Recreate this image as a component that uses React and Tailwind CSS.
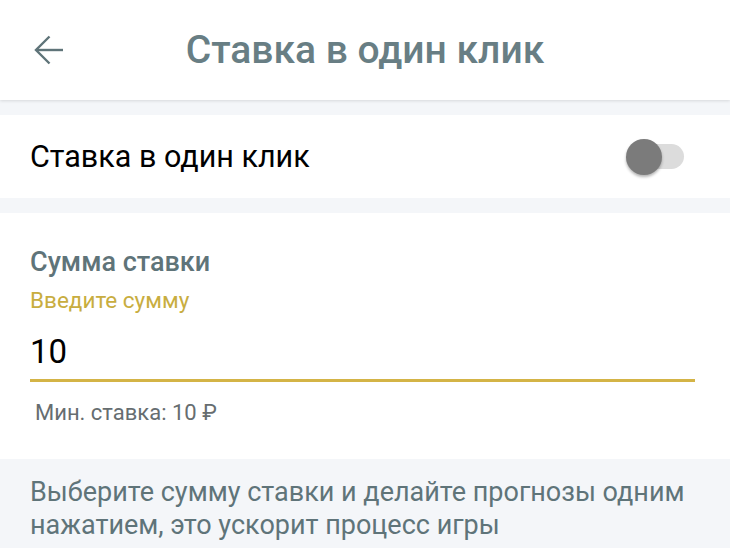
const BackArrow = () => (
    <svg width="30" height="30" viewBox="0 0 30 30" fill="none" stroke="currentColor" strokeWidth="2.4" strokeLinecap="butt">
        <path d="M29 15H2" />
        <path d="M15.5 1.5L2 15l13.5 13.5" />
    </svg>
);

const App = () => {
    return (
        <div className="w-[730px] h-[548px] overflow-hidden bg-[#f4f6f9]" style={{ fontFamily: 'Roboto, "Noto Sans", sans-serif' }}>
            <header className="relative h-[100px] bg-white shadow-[0_1px_3px_rgba(0,0,0,0.12)] flex items-center justify-center">
                <button className="absolute left-[34px] top-[35px] text-[#5f7479]">
                    <BackArrow />
                </button>
                <h1 className="text-[39px] font-medium text-[#687e84] leading-none">Ставка в один клик</h1>
            </header>

            <div className="mt-[15px] h-[83px] bg-white px-[30px] flex items-center justify-between">
                <span className="text-[30.5px] text-black">Ставка в один клик</span>
                <div className="relative w-[58px] h-[36px] mr-[16px] flex items-center">
                    <div className="absolute right-0 w-[50px] h-[25px] rounded-full bg-[#dcdcdc]" />
                    <div className="absolute left-0 w-[36px] h-[36px] rounded-full bg-[#7b7b7b] shadow-[0_2px_3px_rgba(0,0,0,0.3)]" />
                </div>
            </div>

            <section className="mt-[15px] h-[246px] bg-white px-[30px] pt-[33px]">
                <div className="text-[27px] leading-[32px] font-medium text-[#5f7479]">Сумма ставки</div>
                <div className="mt-[9px] text-[22.5px] leading-[26px] text-[#c8ad40]">Введите сумму</div>
                <div className="mt-[19px] text-[33px] leading-[40px] text-black">10</div>
                <div className="mt-[7px] h-[3px] w-[665px] bg-[#d4b446]" />
                <div className="mt-[18px] pl-[5px] text-[22px] leading-[26px] text-[#666d70]">Мин. ставка: 10 ₽</div>
            </section>

            <div className="px-[30px] pt-[17px] text-[27px] leading-[33px] text-[#5f7479]">
                Выберите сумму ставки и делайте прогнозы одним нажатием, это ускорит процесс игры
            </div>
        </div>
    );
};

export default App;
